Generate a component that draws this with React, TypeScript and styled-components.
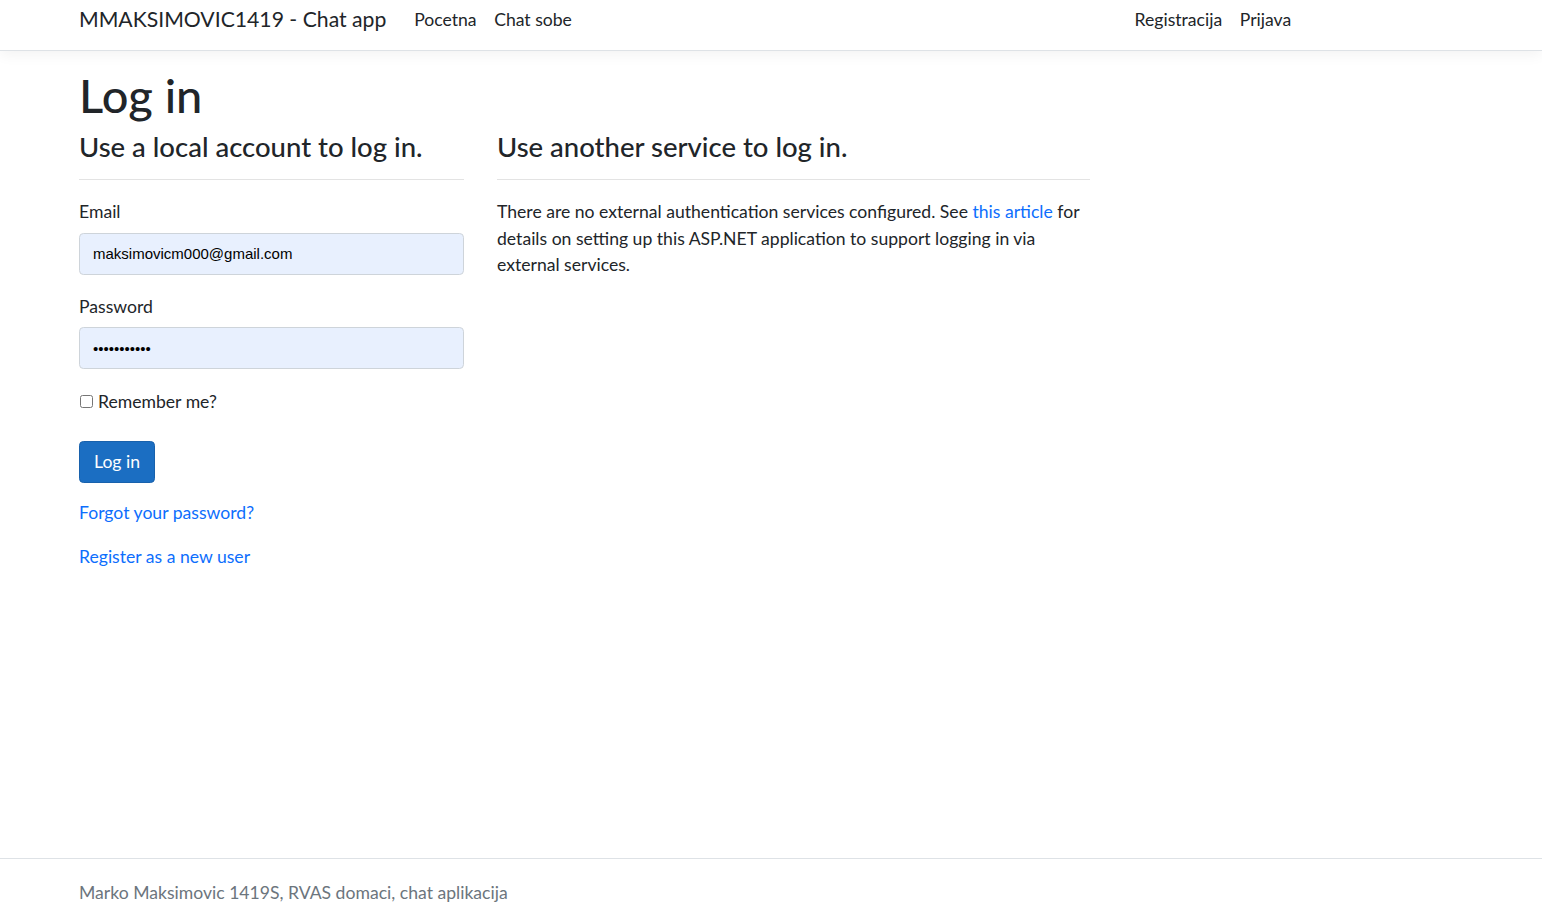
import React from "react";
import styled, { createGlobalStyle } from "styled-components";

const GlobalStyle = createGlobalStyle`
  html, body {
    margin: 0;
    padding: 0;
  }
  body {
    font-family: Lato, "Noto Sans", sans-serif;
    font-size: 17.6px;
    line-height: 1.5;
    color: #212529;
    background: #fff;
  }
  * {
    box-sizing: border-box;
  }
`;

const Page = styled.div`
  min-height: 100vh;
  display: flex;
  flex-direction: column;
`;

const Container = styled.div`
  width: 1221px;
  margin-left: 79px;
`;

const NavBar = styled.header`
  height: 51px;
  border-bottom: 1px solid #dee2e6;
  box-shadow: 0 4px 13px rgba(0, 0, 0, 0.05);
  background: #fff;
`;

const NavInner = styled(Container)`
  height: 100%;
  display: flex;
  align-items: center;
  padding-bottom: 10px;
`;

const Brand = styled.a`
  font-size: 21.2px;
  color: #212529;
  text-decoration: none;
  margin-right: 19px;
`;

const NavList = styled.nav<{ $right?: boolean }>`
  display: flex;
  margin-left: ${(p) => (p.$right ? "auto" : "0")};
`;

const NavLink = styled.a`
  color: #212529;
  text-decoration: none;
  padding: 0 8.8px;
`;

const Main = styled(Container)`
  padding-top: 16px;
  flex: 1;
`;

const Title = styled.h1`
  font-size: 47px;
  font-weight: 500;
  line-height: 1.2;
  margin: 0 0 7px;
`;

const Row = styled.div`
  display: flex;
  gap: 33px;
`;

const Column = styled.section<{ $width: number }>`
  width: ${(p) => p.$width}px;
`;

const SubTitle = styled.h2`
  font-size: 27.5px;
  font-weight: 500;
  line-height: 1.2;
  margin: 0;
`;

const Rule = styled.hr`
  border: 0;
  border-top: 1px solid #e3e3e3;
  margin: 16px 0 19px;
`;

const Field = styled.div`
  margin-bottom: 19.5px;
`;

const Label = styled.label`
  display: block;
  margin-bottom: 6.8px;
`;

const Input = styled.input`
  display: block;
  width: 100%;
  height: 42px;
  padding: 6px 13px;
  font-family: "Liberation Sans", Arial, sans-serif;
  font-size: 15px;
  color: #000;
  background: #e8f0fe;
  border: 1px solid #ced4da;
  border-radius: 4.4px;
`;

const CheckRow = styled.label`
  display: flex;
  align-items: center;
  gap: 5px;
  margin: 0 0 25.5px;
`;

const CheckBox = styled.input`
  margin: 0 0 0 1px;
  width: 13px;
  height: 13px;
`;

const Button = styled.button`
  display: block;
  height: 42px;
  padding: 0 14px;
  font-family: inherit;
  font-size: 17.6px;
  color: #fff;
  background: #1b6ec2;
  border: 1px solid #1861ac;
  border-radius: 4.4px;
  margin-bottom: 17px;
`;

const LinkLine = styled.p`
  margin: 0 0 17.5px;
`;

const Link = styled.a`
  color: #0d6efd;
  text-decoration: none;
`;

const Text = styled.p`
  margin: 0;
`;

const Footer = styled.footer`
  height: 61px;
  padding-top: 21px;
  border-top: 1px solid #dee2e6;
  color: #6c757d;
`;

export default function App() {
  return (
    <Page>
      <GlobalStyle />
      <NavBar>
        <NavInner>
          <Brand href="#">MMAKSIMOVIC1419 - Chat app</Brand>
          <NavList>
            <NavLink href="#">Pocetna</NavLink>
            <NavLink href="#">Chat sobe</NavLink>
          </NavList>
          <NavList $right>
            <NavLink href="#">Registracija</NavLink>
            <NavLink href="#">Prijava</NavLink>
          </NavList>
        </NavInner>
      </NavBar>

      <Main>
        <Title>Log in</Title>
        <Row>
          <Column $width={385}>
            <SubTitle>Use a local account to log in.</SubTitle>
            <Rule />
            <Field>
              <Label>Email</Label>
              <Input type="email" defaultValue="maksimovicm000@gmail.com" />
            </Field>
            <Field>
              <Label>Password</Label>
              <Input type="password" defaultValue="maksimovic1" />
            </Field>
            <CheckRow>
              <CheckBox type="checkbox" />
              Remember me?
            </CheckRow>
            <Button>Log in</Button>
            <LinkLine>
              <Link href="#">Forgot your password?</Link>
            </LinkLine>
            <LinkLine>
              <Link href="#">Register as a new user</Link>
            </LinkLine>
          </Column>
          <Column $width={593}>
            <SubTitle>Use another service to log in.</SubTitle>
            <Rule />
            <Text>
              There are no external authentication services configured. See{" "}
              <Link href="#">this article</Link> for details on setting up this
              ASP.NET application to support logging in via external services.
            </Text>
          </Column>
        </Row>
      </Main>

      <Footer>
        <Container>Marko Maksimovic 1419S, RVAS domaci, chat aplikacija</Container>
      </Footer>
    </Page>
  );
}
